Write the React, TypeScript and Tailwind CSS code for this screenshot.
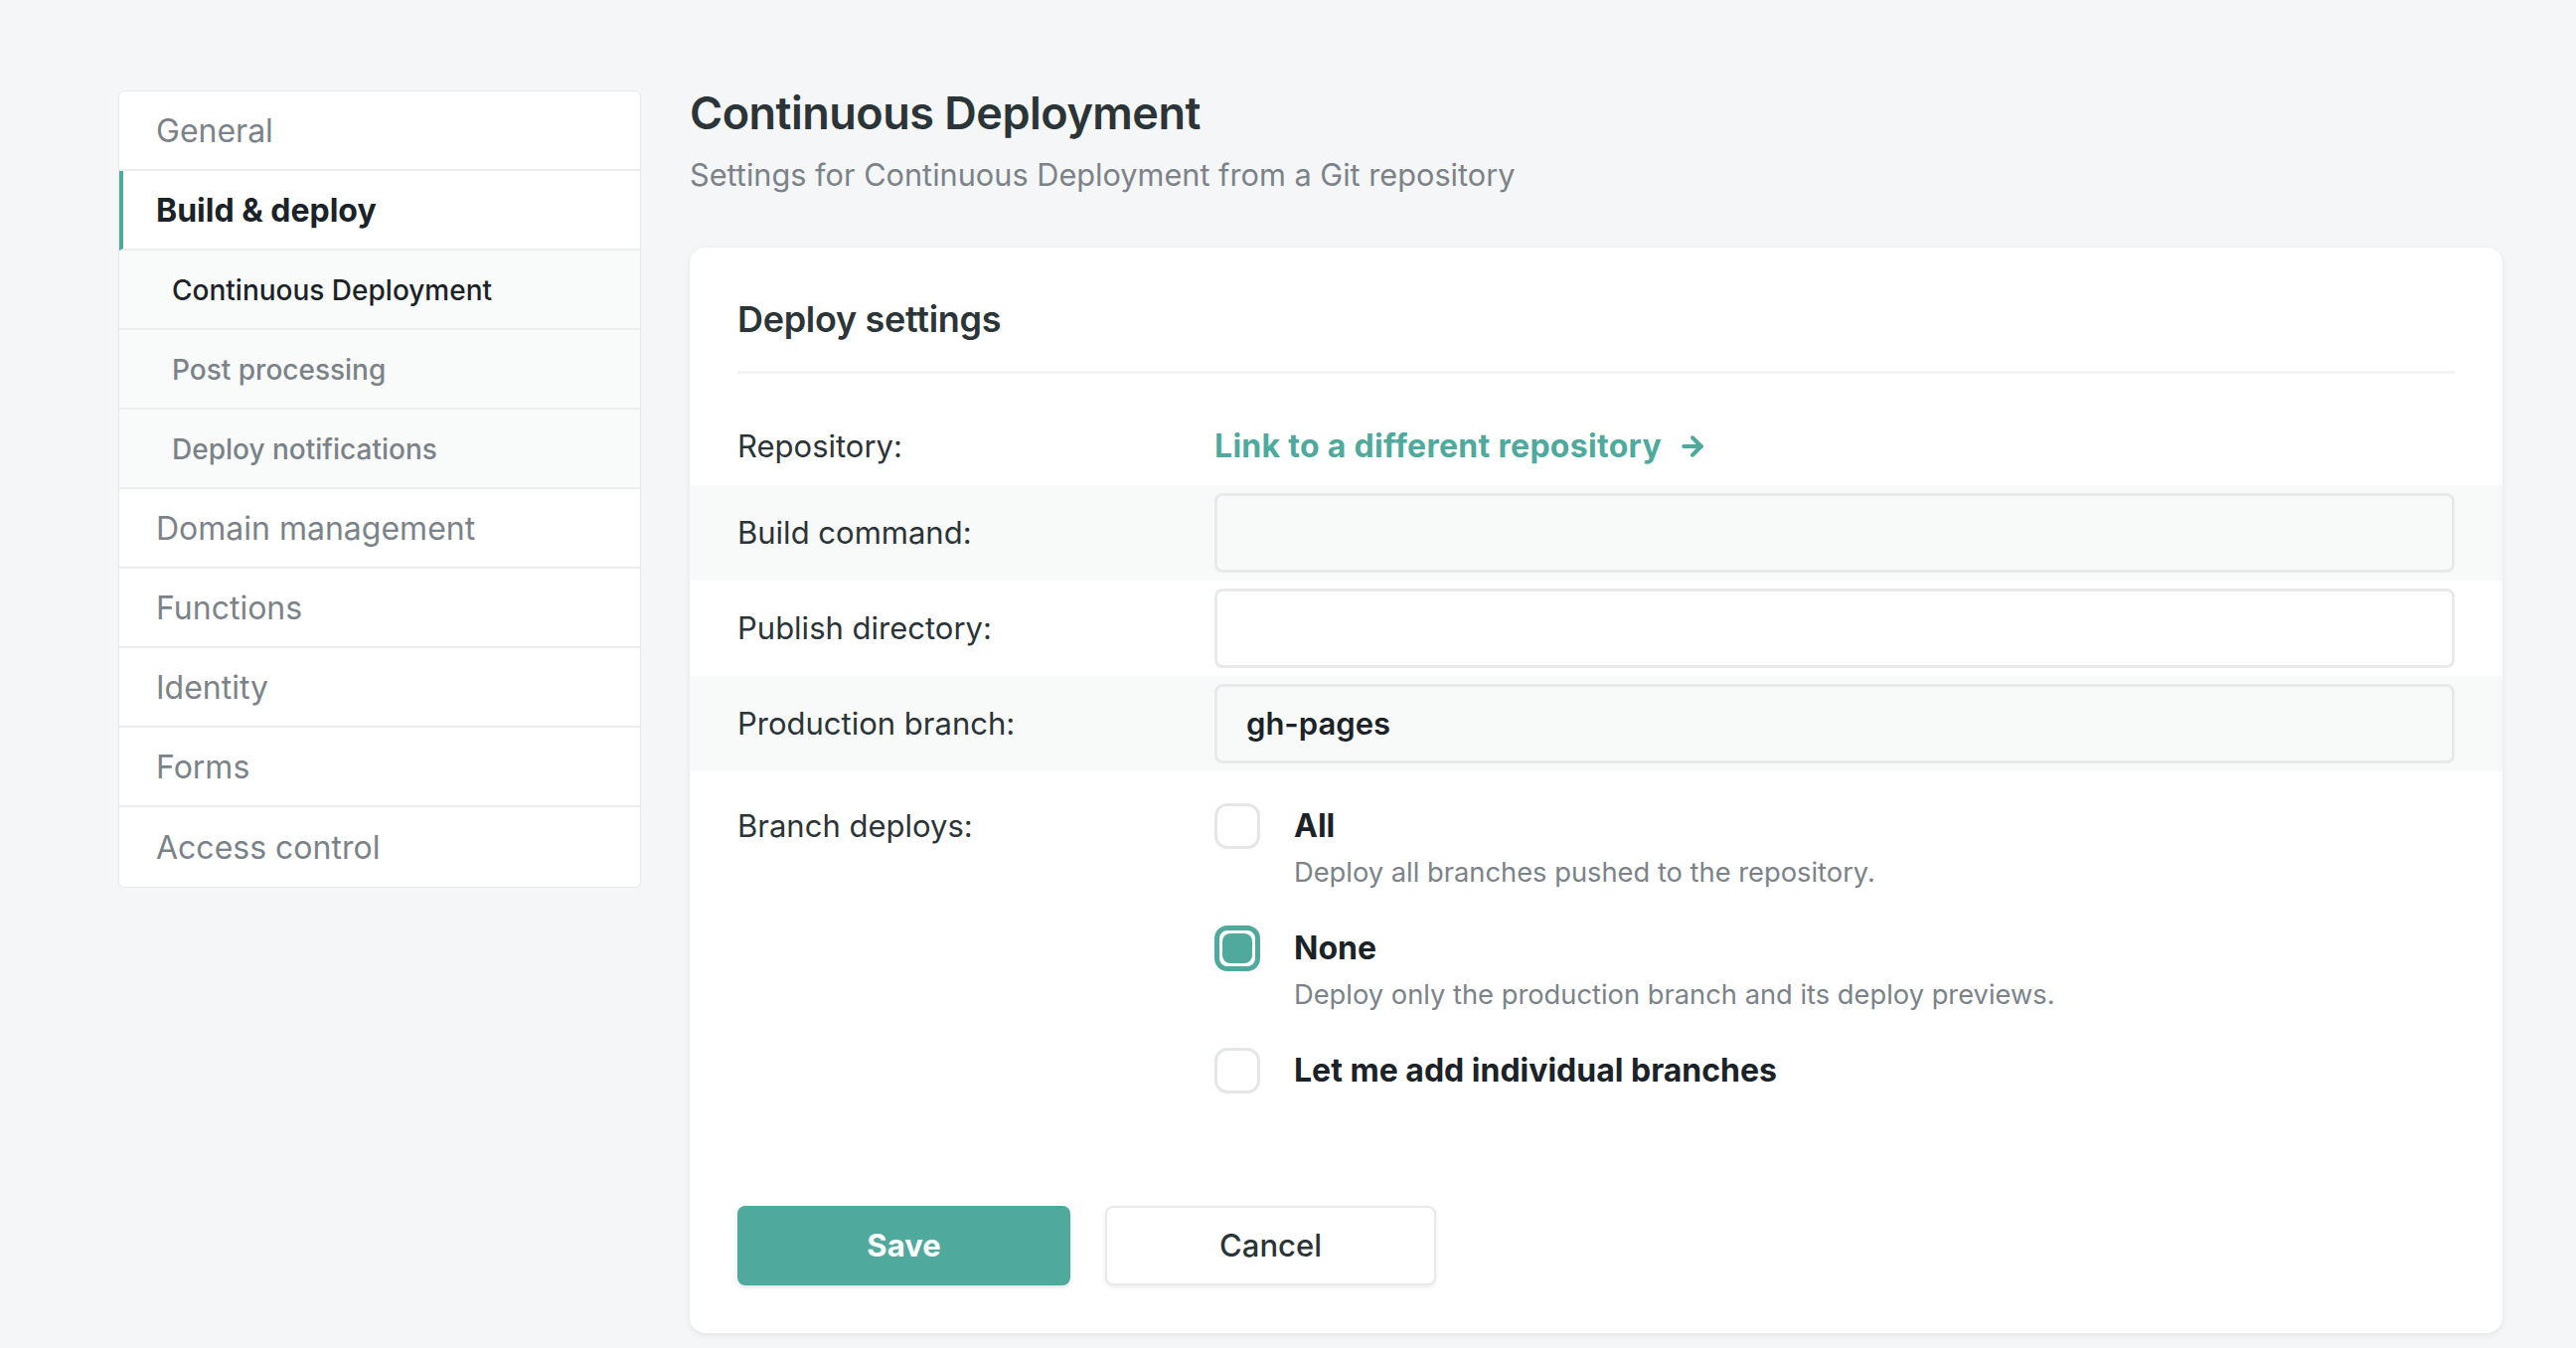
import { ArrowRight } from "lucide-react";

type NavItem = {
  label: string;
  sub?: boolean;
  active?: boolean;
  current?: boolean;
};

const NAV_ITEMS: NavItem[] = [
  { label: "General" },
  { label: "Build & deploy", active: true },
  { label: "Continuous Deployment", sub: true, current: true },
  { label: "Post processing", sub: true },
  { label: "Deploy notifications", sub: true },
  { label: "Domain management" },
  { label: "Functions" },
  { label: "Identity" },
  { label: "Forms" },
  { label: "Access control" },
];

function SideNav() {
  return (
    <nav className="mt-[4px] w-[526px] shrink-0 rounded-[6px] border border-[#e6e8e9] bg-white overflow-hidden">
      {NAV_ITEMS.map((item, i) => {
        const last = i === NAV_ITEMS.length - 1;
        if (item.sub) {
          return (
            <div
              key={item.label}
              className={`flex h-[80px] items-center bg-[#f9fafa] pl-[53px] pt-[2px] text-[28px] font-medium border-b-2 border-[#eceded] ${
                item.current ? "text-[#1b2328]" : "text-[#7b8389]"
              }`}
            >
              {item.label}
            </div>
          );
        }
        return (
          <div
            key={item.label}
            className={`flex h-[80px] items-center pt-[2px] text-[32px] ${
              last ? "" : "border-b-2 border-[#eceded]"
            } ${
              item.active
                ? "border-l-4 border-l-[#4fa99d] pl-[33px] font-bold text-[#1b2328]"
                : "pl-[37px] text-[#7b8389]"
            }`}
          >
            {item.label}
          </div>
        );
      })}
    </nav>
  );
}

function FieldRow({
  label,
  value,
  shaded,
}: {
  label: string;
  value?: string;
  shaded?: boolean;
}) {
  return (
    <div
      className={`-mx-[48px] flex h-[96px] items-center px-[48px] ${
        shaded ? "bg-[#f8f9f9]" : "bg-white"
      }`}
    >
      <div className="w-[480px] shrink-0 text-[31px] text-[#2b3437]">{label}</div>
      <div className="flex h-[80px] flex-1 items-center rounded-[8px] border-[3px] border-[#e8e9ea] px-[29px] text-[31px] font-semibold text-[#1b2328]">
        {value}
      </div>
    </div>
  );
}

function Check({ checked }: { checked?: boolean }) {
  if (checked) {
    return (
      <div className="flex h-[46px] w-[46px] shrink-0 items-center justify-center rounded-[13px] border-[5px] border-[#4fa99d] bg-white p-[3px]">
        <div className="h-full w-full rounded-[8px] bg-[#4fa99d]" />
      </div>
    );
  }
  return <div className="h-[46px] w-[46px] shrink-0 rounded-[13px] border-[3px] border-[#e5e6e7] bg-white" />;
}

function Option({
  title,
  desc,
  checked,
}: {
  title: string;
  desc?: string;
  checked?: boolean;
}) {
  return (
    <div className="flex items-start gap-[34px]">
      <Check checked={checked} />
      <div className="flex flex-col">
        <div className="text-[32px] font-bold leading-[46px] text-[#1b2328]">{title}</div>
        {desc && (
          <div className="mt-[6px] text-[27.3px] leading-[36px] text-[#7b8389]">{desc}</div>
        )}
      </div>
    </div>
  );
}

export default function App() {
  return (
    <div
      className="flex min-h-screen items-start gap-[49px] bg-[#f5f6f7] pb-[16px] pl-[119px] pr-[74px] pt-[87px]"
      style={{ fontFamily: "Inter, 'Noto Sans', sans-serif" }}
    >
      <SideNav />

      <main className="flex-1">
        <h1 className="-mt-[1px] text-[45px] font-semibold leading-[56px] tracking-[-0.5px] text-[#2b3437]">
          Continuous Deployment
        </h1>
        <p className="mt-[16px] text-[30.7px] leading-[36px] text-[#7b8389]">
          Settings for Continuous Deployment from a Git repository
        </p>

        <section className="mt-[55px] rounded-[16px] bg-white px-[48px] pb-[48px] pt-[50px] shadow-[0_2px_6px_rgba(0,0,0,0.08)]">
          <h2 className="text-[36px] font-semibold leading-[44px] tracking-[-0.3px] text-[#2b3437]">
            Deploy settings
          </h2>
          <div className="mt-[30px] h-[3px] bg-[#f2f3f4]" />

          <div className="mt-[34px] flex h-[78px] items-center">
            <div className="w-[480px] shrink-0 text-[31px] text-[#2b3437]">Repository:</div>
            <a className="flex items-center gap-[16px] text-[32px] font-bold tracking-[0.3px] text-[#4fa99d]">
              Link to a different repository
              <ArrowRight size={30} strokeWidth={3.2} />
            </a>
          </div>

          <FieldRow label="Build command:" shaded />
          <FieldRow label="Publish directory:" />
          <FieldRow label="Production branch:" value="gh-pages" shaded />

          <div className="mt-[32px] flex items-start">
            <div className="w-[480px] shrink-0 text-[31px] leading-[46px] text-[#2b3437]">
              Branch deploys:
            </div>
            <div className="flex flex-col gap-[35px]">
              <Option title="All" desc="Deploy all branches pushed to the repository." />
              <Option
                title="None"
                desc="Deploy only the production branch and its deploy previews."
                checked
              />
              <Option title="Let me add individual branches" />
            </div>
          </div>

          <div className="mt-[113px] flex gap-[35px]">
            <button className="h-[80px] w-[335px] rounded-[8px] bg-[#4fa99d] text-[31px] font-bold text-white shadow-[0_2px_4px_rgba(0,0,0,0.12)]">
              Save
            </button>
            <button className="h-[80px] w-[333px] rounded-[8px] border-2 border-[#e8e9ea] bg-white text-[31px] font-medium text-[#2b3437] shadow-[0_2px_4px_rgba(0,0,0,0.08)]">
              Cancel
            </button>
          </div>
        </section>
      </main>
    </div>
  );
}
